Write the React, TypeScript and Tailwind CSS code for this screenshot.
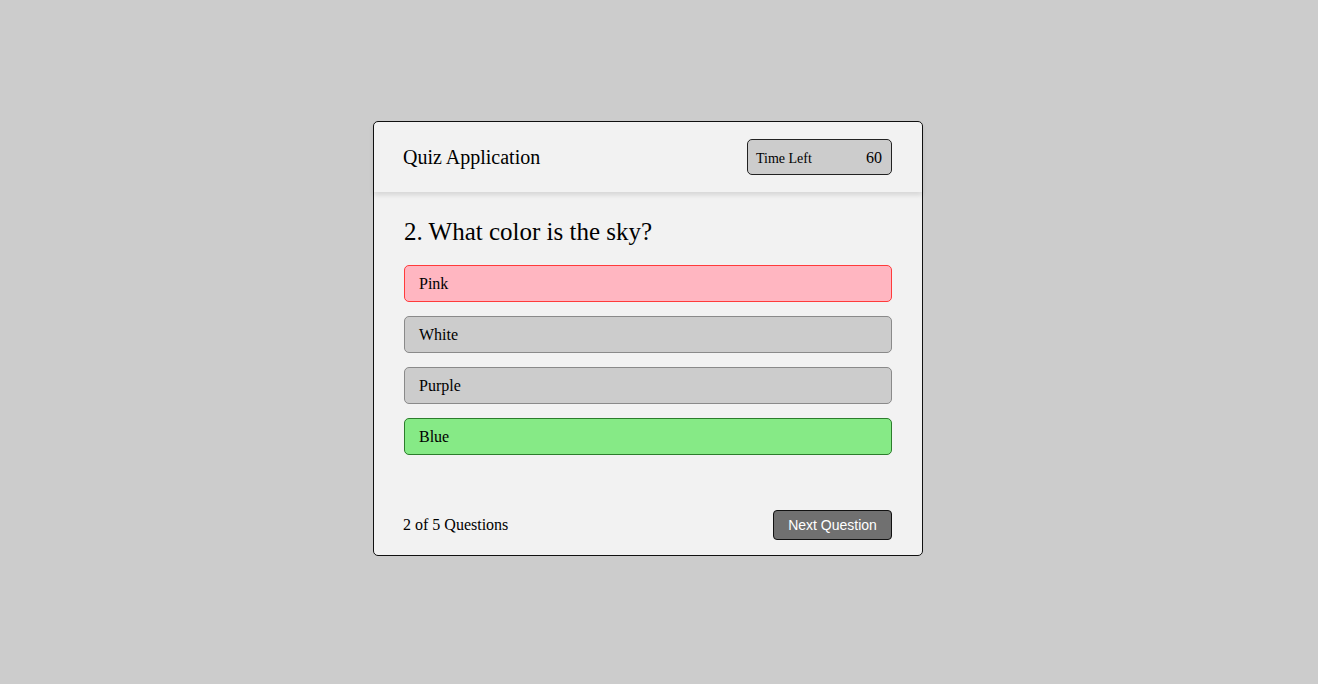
import { FC } from 'react';

type OptionState = 'wrong' | 'idle' | 'correct';

interface Option {
  label: string;
  state: OptionState;
}

const options: Option[] = [
  { label: 'Pink', state: 'wrong' },
  { label: 'White', state: 'idle' },
  { label: 'Purple', state: 'idle' },
  { label: 'Blue', state: 'correct' },
];

const stateClass: Record<OptionState, string> = {
  wrong: 'bg-[#ffb6c1] border-[#ff3b3b]',
  idle: 'bg-[#cccccc] border-[#8a8a8a]',
  correct: 'bg-[#86ea86] border-[#2c7d2c]',
};

const serif = { fontFamily: '"Liberation Serif", "Times New Roman", serif' };

const App: FC = () => (
  <div className="min-h-screen w-full bg-[#cccccc] pt-[121px]" style={serif}>
    <div className="ml-[373px] w-[550px] h-[435px] flex flex-col rounded-[5px] border border-[#111] bg-[#f2f2f2] text-black">
      {/* header */}
      <div className="flex h-[70px] items-center justify-between pl-[29px] pr-[30px] shadow-[0_3px_5px_rgba(0,0,0,0.12)]">
        <h1 className="text-[20px] leading-none">Quiz Application</h1>
        <div className="flex h-[36px] w-[145px] items-center justify-between rounded-[5px] border border-[#222] bg-[#cccccc] pl-[8px] pr-[9px]">
          <span className="text-[14px] pt-[2px]">Time Left</span>
          <span className="text-[16px] pt-[2px]">60</span>
        </div>
      </div>

      {/* question */}
      <div className="flex flex-1 flex-col px-[30px] pt-[26px]">
        <h2 className="text-[25px] leading-[28px] mb-[19px]">2. What color is the sky?</h2>
        <div className="flex flex-col gap-[14px]">
          {options.map((o) => (
            <div
              key={o.label}
              className={`flex h-[37px] items-center rounded-[5px] border pl-[14px] text-[16px] ${stateClass[o.state]}`}
            >
              {o.label}
            </div>
          ))}
        </div>
      </div>

      {/* footer */}
      <div className="flex items-center justify-between pl-[29px] pr-[30px] pb-[15px]">
        <span className="text-[16px]">2 of 5 Questions</span>
        <button
          className="h-[30px] w-[119px] rounded-[4px] border border-[#111] bg-[#707070] text-[14px] text-white"
          style={{ fontFamily: '"Liberation Sans", Arial, sans-serif' }}
        >
          Next Question
        </button>
      </div>
    </div>
  </div>
);

export default App;
